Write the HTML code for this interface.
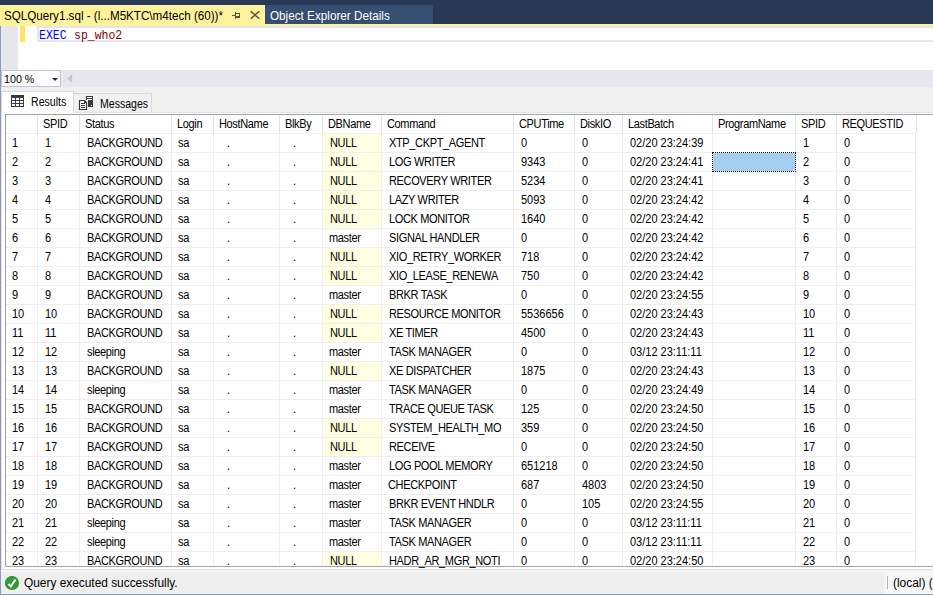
<!DOCTYPE html>
<html><head><meta charset="utf-8"><style>
*{margin:0;padding:0;box-sizing:border-box}
html,body{width:933px;height:595px;overflow:hidden;background:#F0F0F0;font-family:"Liberation Sans",sans-serif;}
.a{position:absolute}
.t{position:absolute;white-space:pre;line-height:1;}
.g{font-size:12.5px;color:#000;transform:scaleX(0.88);transform-origin:0 0}
.L{letter-spacing:-0.4px}
.s{font-size:12px;transform:scaleX(0.962);transform-origin:0 0}
</style></head><body>

<div class="a" style="left:0;top:0;width:933px;height:24px;background:#293955"></div>
<div class="a" style="left:0;top:24px;width:933px;height:2px;background:#FFF29D"></div>
<div class="a" style="left:0;top:5px;width:265px;height:21px;background:#FFF29D"></div>
<div class="t s" style="left:4px;top:10px;font-size:12.5px;color:#000;transform:scaleX(0.93)">SQLQuery1.sql - (l...M5KTC\m4tech (60))*</div>
<svg class="a" style="left:228px;top:6px" width="36" height="18" viewBox="0 0 36 18"><g fill="#5F5638"><rect x="4" y="9" width="3" height="1"/><rect x="7" y="6" width="1" height="7"/><rect x="8" y="7" width="4" height="1"/><rect x="11" y="7" width="1" height="5"/><rect x="8" y="10" width="4" height="2"/></g><path d="M22.6 5.2L31.4 12.8M31.4 5.2L22.6 12.8" stroke="#5F5638" stroke-width="1.5"/></svg>
<div class="a" style="left:265px;top:5px;width:168px;height:19px;background:#364E6F"></div>
<div class="t s" style="left:270px;top:10px;font-size:12.5px;color:#FFFFFF;transform:scaleX(0.937)">Object Explorer Details</div>
<div class="a" style="left:0;top:26px;width:933px;height:44px;background:#FFFFFF"></div>
<div class="a" style="left:1px;top:26px;width:17px;height:44px;background:#E6E7E8"></div>
<div class="a" style="left:20px;top:26px;width:5px;height:16px;background:#FFE55E"></div>
<div class="a" style="left:37px;top:26px;width:896px;height:16px;border:2px solid #E6E6F0;border-right:none"></div>
<div class="t" style="left:39px;top:29.5px;font-family:'Liberation Mono',monospace;font-size:12px;color:#0000FF;transform:scaleX(0.955);transform-origin:0 0">EXEC</div>
<div class="t" style="left:73.5px;top:29.5px;font-family:'Liberation Mono',monospace;font-size:12px;color:#800000;transform:scaleX(0.955);transform-origin:0 0">sp_who2</div>
<div class="a" style="left:0;top:70px;width:933px;height:17px;background:#E8E8EC"></div>
<div class="a" style="left:1px;top:70px;width:60px;height:17px;background:#FCFCFC;border:1px solid #C0C4D8"></div>
<div class="t" style="left:4px;top:74px;font-size:11.5px;color:#000;transform:scaleX(0.93);transform-origin:0 0">100 %</div>
<svg class="a" style="left:52px;top:78px" width="6" height="3" viewBox="0 0 6 3"><path d="M0 0H6L3 3Z" fill="#1B2840"/></svg>
<svg class="a" style="left:67px;top:74px" width="6" height="9" viewBox="0 0 6 9"><path d="M5.2 0V9L0 4.5Z" fill="#C6C7CE"/></svg>
<div class="a" style="left:1px;top:91px;width:73px;height:24px;background:#FFFFFF;border:1px solid #D9D9D9;border-bottom:none"></div>
<div class="a" style="left:73px;top:93px;width:79px;height:20px;background:#F0F0F0;border:1px solid #D9D9D9;border-bottom:none"></div>
<div class="a" style="left:73px;top:112px;width:860px;height:1px;background:#E2E2E2"></div>
<svg class="a" style="left:11px;top:95px" width="13" height="12" viewBox="0 0 13 12"><rect x="0" y="0" width="13" height="12" fill="#3A3A3A"/><g fill="#fff"><rect x="1" y="3" width="3" height="2"/><rect x="5" y="3" width="3" height="2"/><rect x="9" y="3" width="3" height="2"/><rect x="1" y="6" width="3" height="2"/><rect x="5" y="6" width="3" height="2"/><rect x="9" y="6" width="3" height="2"/><rect x="1" y="9" width="3" height="2"/><rect x="5" y="9" width="3" height="2"/><rect x="9" y="9" width="3" height="2"/></g></svg>
<div class="t g" style="left:31px;top:96px;font-size:12px">Results</div>
<svg class="a" style="left:74px;top:90px" width="26" height="24" viewBox="0 0 26 24"><rect x="12" y="6" width="7" height="11" fill="#3A3A3A"/><rect x="13" y="7" width="5" height="1" fill="#fff"/><rect x="13" y="9" width="5" height="1" fill="#fff"/><rect x="17" y="15" width="1" height="1" fill="#fff"/><rect x="4" y="10" width="10" height="10" fill="#F0F0F0"/><path d="M5.5 10.5H10.5L12.5 12.5V19.5H5.5Z" fill="#fff" stroke="#3A3A3A" stroke-width="1.2"/><path d="M10 10L13 13H10Z" fill="#3A3A3A"/><rect x="7" y="13" width="4" height="1" fill="#3A3A3A"/><rect x="7" y="15" width="4" height="1" fill="#3A3A3A"/><rect x="7" y="17" width="4" height="1" fill="#3A3A3A"/></svg>
<div class="t g" style="left:100px;top:98px;font-size:12px">Messages</div>
<div class="a" style="left:1px;top:113px;width:932px;height:456px;background:#FFFFFF;border-left:1px solid #E3E3E3"></div>
<div class="a" style="left:5px;top:114px;width:928px;height:453px;background:#FFFFFF;border-top:1px solid #A0A3AE;border-left:1px solid #A0A3AE;border-bottom:1px solid #A0A3AE"></div>
<div class="a" style="left:323px;top:134px;width:58px;height:18px;background:#FFFFE1"></div>
<div class="a" style="left:323px;top:153px;width:58px;height:18px;background:#FFFFE1"></div>
<div class="a" style="left:323px;top:172px;width:58px;height:18px;background:#FFFFE1"></div>
<div class="a" style="left:323px;top:191px;width:58px;height:18px;background:#FFFFE1"></div>
<div class="a" style="left:323px;top:210px;width:58px;height:18px;background:#FFFFE1"></div>
<div class="a" style="left:323px;top:248px;width:58px;height:18px;background:#FFFFE1"></div>
<div class="a" style="left:323px;top:267px;width:58px;height:18px;background:#FFFFE1"></div>
<div class="a" style="left:323px;top:305px;width:58px;height:18px;background:#FFFFE1"></div>
<div class="a" style="left:323px;top:324px;width:58px;height:18px;background:#FFFFE1"></div>
<div class="a" style="left:323px;top:362px;width:58px;height:18px;background:#FFFFE1"></div>
<div class="a" style="left:323px;top:419px;width:58px;height:18px;background:#FFFFE1"></div>
<div class="a" style="left:323px;top:438px;width:58px;height:18px;background:#FFFFE1"></div>
<div class="a" style="left:323px;top:552px;width:58px;height:14px;background:#FFFFE1"></div>
<div class="a" style="left:6px;top:133px;width:909px;height:1px;background:#EEEEEE"></div>
<div class="a" style="left:6px;top:152px;width:909px;height:1px;background:#EEEEEE"></div>
<div class="a" style="left:6px;top:171px;width:909px;height:1px;background:#EEEEEE"></div>
<div class="a" style="left:6px;top:190px;width:909px;height:1px;background:#EEEEEE"></div>
<div class="a" style="left:6px;top:209px;width:909px;height:1px;background:#EEEEEE"></div>
<div class="a" style="left:6px;top:228px;width:909px;height:1px;background:#EEEEEE"></div>
<div class="a" style="left:6px;top:247px;width:909px;height:1px;background:#EEEEEE"></div>
<div class="a" style="left:6px;top:266px;width:909px;height:1px;background:#EEEEEE"></div>
<div class="a" style="left:6px;top:285px;width:909px;height:1px;background:#EEEEEE"></div>
<div class="a" style="left:6px;top:304px;width:909px;height:1px;background:#EEEEEE"></div>
<div class="a" style="left:6px;top:323px;width:909px;height:1px;background:#EEEEEE"></div>
<div class="a" style="left:6px;top:342px;width:909px;height:1px;background:#EEEEEE"></div>
<div class="a" style="left:6px;top:361px;width:909px;height:1px;background:#EEEEEE"></div>
<div class="a" style="left:6px;top:380px;width:909px;height:1px;background:#EEEEEE"></div>
<div class="a" style="left:6px;top:399px;width:909px;height:1px;background:#EEEEEE"></div>
<div class="a" style="left:6px;top:418px;width:909px;height:1px;background:#EEEEEE"></div>
<div class="a" style="left:6px;top:437px;width:909px;height:1px;background:#EEEEEE"></div>
<div class="a" style="left:6px;top:456px;width:909px;height:1px;background:#EEEEEE"></div>
<div class="a" style="left:6px;top:475px;width:909px;height:1px;background:#EEEEEE"></div>
<div class="a" style="left:6px;top:494px;width:909px;height:1px;background:#EEEEEE"></div>
<div class="a" style="left:6px;top:513px;width:909px;height:1px;background:#EEEEEE"></div>
<div class="a" style="left:6px;top:532px;width:909px;height:1px;background:#EEEEEE"></div>
<div class="a" style="left:6px;top:551px;width:909px;height:1px;background:#EEEEEE"></div>
<div class="a" style="left:37px;top:115px;width:1px;height:18px;background:#E2E2E2"></div>
<div class="a" style="left:37px;top:133px;width:1px;height:433px;background:#EEEEEE"></div>
<div class="a" style="left:79px;top:115px;width:1px;height:18px;background:#E2E2E2"></div>
<div class="a" style="left:79px;top:133px;width:1px;height:433px;background:#EEEEEE"></div>
<div class="a" style="left:171px;top:115px;width:1px;height:18px;background:#E2E2E2"></div>
<div class="a" style="left:171px;top:133px;width:1px;height:433px;background:#EEEEEE"></div>
<div class="a" style="left:213px;top:115px;width:1px;height:18px;background:#E2E2E2"></div>
<div class="a" style="left:213px;top:133px;width:1px;height:433px;background:#EEEEEE"></div>
<div class="a" style="left:279px;top:115px;width:1px;height:18px;background:#E2E2E2"></div>
<div class="a" style="left:279px;top:133px;width:1px;height:433px;background:#EEEEEE"></div>
<div class="a" style="left:322px;top:115px;width:1px;height:18px;background:#E2E2E2"></div>
<div class="a" style="left:322px;top:133px;width:1px;height:433px;background:#EEEEEE"></div>
<div class="a" style="left:381px;top:115px;width:1px;height:18px;background:#E2E2E2"></div>
<div class="a" style="left:381px;top:133px;width:1px;height:433px;background:#EEEEEE"></div>
<div class="a" style="left:513px;top:115px;width:1px;height:18px;background:#E2E2E2"></div>
<div class="a" style="left:513px;top:133px;width:1px;height:433px;background:#EEEEEE"></div>
<div class="a" style="left:574px;top:115px;width:1px;height:18px;background:#E2E2E2"></div>
<div class="a" style="left:574px;top:133px;width:1px;height:433px;background:#EEEEEE"></div>
<div class="a" style="left:622px;top:115px;width:1px;height:18px;background:#E2E2E2"></div>
<div class="a" style="left:622px;top:133px;width:1px;height:433px;background:#EEEEEE"></div>
<div class="a" style="left:712px;top:115px;width:1px;height:18px;background:#E2E2E2"></div>
<div class="a" style="left:712px;top:133px;width:1px;height:433px;background:#EEEEEE"></div>
<div class="a" style="left:795px;top:115px;width:1px;height:18px;background:#E2E2E2"></div>
<div class="a" style="left:795px;top:133px;width:1px;height:433px;background:#EEEEEE"></div>
<div class="a" style="left:836px;top:115px;width:1px;height:18px;background:#E2E2E2"></div>
<div class="a" style="left:836px;top:133px;width:1px;height:433px;background:#EEEEEE"></div>
<div class="a" style="left:916px;top:115px;width:1px;height:18px;background:#E2E2E2"></div>
<div class="a" style="left:915px;top:133px;width:1px;height:433px;background:#EEEEEE"></div>
<div class="t g L" style="left:43px;top:118px">SPID</div>
<div class="t g L" style="left:85px;top:118px">Status</div>
<div class="t g L" style="left:177px;top:118px">Login</div>
<div class="t g L" style="left:219px;top:118px">HostName</div>
<div class="t g L" style="left:285px;top:118px">BlkBy</div>
<div class="t g L" style="left:328px;top:118px">DBName</div>
<div class="t g L" style="left:387px;top:118px">Command</div>
<div class="t g L" style="left:519px;top:118px">CPUTime</div>
<div class="t g L" style="left:580px;top:118px">DiskIO</div>
<div class="t g L" style="left:628px;top:118px">LastBatch</div>
<div class="t g L" style="left:718px;top:118px">ProgramName</div>
<div class="t g L" style="left:801px;top:118px">SPID</div>
<div class="t g L" style="left:842px;top:118px">REQUESTID</div>
<div class="t g" style="left:12px;top:137px">1</div>
<div class="t g" style="left:45px;top:137px">1</div>
<div class="t g L" style="left:87px;top:137px">BACKGROUND</div>
<div class="t g L" style="left:178px;top:137px">sa</div>
<div class="t g" style="left:227px;top:137px">.</div>
<div class="t g" style="left:293px;top:137px">.</div>
<div class="t g L" style="left:330px;top:137px">NULL</div>
<div class="t g L" style="left:389px;top:137px">XTP_CKPT_AGENT</div>
<div class="t g" style="left:521px;top:137px">0</div>
<div class="t g" style="left:582px;top:137px">0</div>
<div class="t g" style="left:630px;top:137px">02/20 23:24:39</div>
<div class="t g" style="left:803px;top:137px">1</div>
<div class="t g" style="left:844px;top:137px">0</div>
<div class="t g" style="left:12px;top:156px">2</div>
<div class="t g" style="left:45px;top:156px">2</div>
<div class="t g L" style="left:87px;top:156px">BACKGROUND</div>
<div class="t g L" style="left:178px;top:156px">sa</div>
<div class="t g" style="left:227px;top:156px">.</div>
<div class="t g" style="left:293px;top:156px">.</div>
<div class="t g L" style="left:330px;top:156px">NULL</div>
<div class="t g L" style="left:389px;top:156px">LOG WRITER</div>
<div class="t g" style="left:521px;top:156px">9343</div>
<div class="t g" style="left:582px;top:156px">0</div>
<div class="t g" style="left:630px;top:156px">02/20 23:24:41</div>
<div class="t g" style="left:803px;top:156px">2</div>
<div class="t g" style="left:844px;top:156px">0</div>
<div class="t g" style="left:12px;top:175px">3</div>
<div class="t g" style="left:45px;top:175px">3</div>
<div class="t g L" style="left:87px;top:175px">BACKGROUND</div>
<div class="t g L" style="left:178px;top:175px">sa</div>
<div class="t g" style="left:227px;top:175px">.</div>
<div class="t g" style="left:293px;top:175px">.</div>
<div class="t g L" style="left:330px;top:175px">NULL</div>
<div class="t g L" style="left:389px;top:175px">RECOVERY WRITER</div>
<div class="t g" style="left:521px;top:175px">5234</div>
<div class="t g" style="left:582px;top:175px">0</div>
<div class="t g" style="left:630px;top:175px">02/20 23:24:41</div>
<div class="t g" style="left:803px;top:175px">3</div>
<div class="t g" style="left:844px;top:175px">0</div>
<div class="t g" style="left:12px;top:194px">4</div>
<div class="t g" style="left:45px;top:194px">4</div>
<div class="t g L" style="left:87px;top:194px">BACKGROUND</div>
<div class="t g L" style="left:178px;top:194px">sa</div>
<div class="t g" style="left:227px;top:194px">.</div>
<div class="t g" style="left:293px;top:194px">.</div>
<div class="t g L" style="left:330px;top:194px">NULL</div>
<div class="t g L" style="left:389px;top:194px">LAZY WRITER</div>
<div class="t g" style="left:521px;top:194px">5093</div>
<div class="t g" style="left:582px;top:194px">0</div>
<div class="t g" style="left:630px;top:194px">02/20 23:24:42</div>
<div class="t g" style="left:803px;top:194px">4</div>
<div class="t g" style="left:844px;top:194px">0</div>
<div class="t g" style="left:12px;top:213px">5</div>
<div class="t g" style="left:45px;top:213px">5</div>
<div class="t g L" style="left:87px;top:213px">BACKGROUND</div>
<div class="t g L" style="left:178px;top:213px">sa</div>
<div class="t g" style="left:227px;top:213px">.</div>
<div class="t g" style="left:293px;top:213px">.</div>
<div class="t g L" style="left:330px;top:213px">NULL</div>
<div class="t g L" style="left:389px;top:213px">LOCK MONITOR</div>
<div class="t g" style="left:521px;top:213px">1640</div>
<div class="t g" style="left:582px;top:213px">0</div>
<div class="t g" style="left:630px;top:213px">02/20 23:24:42</div>
<div class="t g" style="left:803px;top:213px">5</div>
<div class="t g" style="left:844px;top:213px">0</div>
<div class="t g" style="left:12px;top:232px">6</div>
<div class="t g" style="left:45px;top:232px">6</div>
<div class="t g L" style="left:87px;top:232px">BACKGROUND</div>
<div class="t g L" style="left:178px;top:232px">sa</div>
<div class="t g" style="left:227px;top:232px">.</div>
<div class="t g" style="left:293px;top:232px">.</div>
<div class="t g L" style="left:329px;top:232px">master</div>
<div class="t g L" style="left:389px;top:232px">SIGNAL HANDLER</div>
<div class="t g" style="left:521px;top:232px">0</div>
<div class="t g" style="left:582px;top:232px">0</div>
<div class="t g" style="left:630px;top:232px">02/20 23:24:42</div>
<div class="t g" style="left:803px;top:232px">6</div>
<div class="t g" style="left:844px;top:232px">0</div>
<div class="t g" style="left:12px;top:251px">7</div>
<div class="t g" style="left:45px;top:251px">7</div>
<div class="t g L" style="left:87px;top:251px">BACKGROUND</div>
<div class="t g L" style="left:178px;top:251px">sa</div>
<div class="t g" style="left:227px;top:251px">.</div>
<div class="t g" style="left:293px;top:251px">.</div>
<div class="t g L" style="left:330px;top:251px">NULL</div>
<div class="t g L" style="left:389px;top:251px">XIO_RETRY_WORKER</div>
<div class="t g" style="left:521px;top:251px">718</div>
<div class="t g" style="left:582px;top:251px">0</div>
<div class="t g" style="left:630px;top:251px">02/20 23:24:42</div>
<div class="t g" style="left:803px;top:251px">7</div>
<div class="t g" style="left:844px;top:251px">0</div>
<div class="t g" style="left:12px;top:270px">8</div>
<div class="t g" style="left:45px;top:270px">8</div>
<div class="t g L" style="left:87px;top:270px">BACKGROUND</div>
<div class="t g L" style="left:178px;top:270px">sa</div>
<div class="t g" style="left:227px;top:270px">.</div>
<div class="t g" style="left:293px;top:270px">.</div>
<div class="t g L" style="left:330px;top:270px">NULL</div>
<div class="t g L" style="left:389px;top:270px">XIO_LEASE_RENEWA</div>
<div class="t g" style="left:521px;top:270px">750</div>
<div class="t g" style="left:582px;top:270px">0</div>
<div class="t g" style="left:630px;top:270px">02/20 23:24:42</div>
<div class="t g" style="left:803px;top:270px">8</div>
<div class="t g" style="left:844px;top:270px">0</div>
<div class="t g" style="left:12px;top:289px">9</div>
<div class="t g" style="left:45px;top:289px">9</div>
<div class="t g L" style="left:87px;top:289px">BACKGROUND</div>
<div class="t g L" style="left:178px;top:289px">sa</div>
<div class="t g" style="left:227px;top:289px">.</div>
<div class="t g" style="left:293px;top:289px">.</div>
<div class="t g L" style="left:329px;top:289px">master</div>
<div class="t g L" style="left:389px;top:289px">BRKR TASK</div>
<div class="t g" style="left:521px;top:289px">0</div>
<div class="t g" style="left:582px;top:289px">0</div>
<div class="t g" style="left:630px;top:289px">02/20 23:24:55</div>
<div class="t g" style="left:803px;top:289px">9</div>
<div class="t g" style="left:844px;top:289px">0</div>
<div class="t g" style="left:12px;top:308px">10</div>
<div class="t g" style="left:45px;top:308px">10</div>
<div class="t g L" style="left:87px;top:308px">BACKGROUND</div>
<div class="t g L" style="left:178px;top:308px">sa</div>
<div class="t g" style="left:227px;top:308px">.</div>
<div class="t g" style="left:293px;top:308px">.</div>
<div class="t g L" style="left:330px;top:308px">NULL</div>
<div class="t g L" style="left:389px;top:308px">RESOURCE MONITOR</div>
<div class="t g" style="left:521px;top:308px">5536656</div>
<div class="t g" style="left:582px;top:308px">0</div>
<div class="t g" style="left:630px;top:308px">02/20 23:24:43</div>
<div class="t g" style="left:803px;top:308px">10</div>
<div class="t g" style="left:844px;top:308px">0</div>
<div class="t g" style="left:12px;top:327px">11</div>
<div class="t g" style="left:45px;top:327px">11</div>
<div class="t g L" style="left:87px;top:327px">BACKGROUND</div>
<div class="t g L" style="left:178px;top:327px">sa</div>
<div class="t g" style="left:227px;top:327px">.</div>
<div class="t g" style="left:293px;top:327px">.</div>
<div class="t g L" style="left:330px;top:327px">NULL</div>
<div class="t g L" style="left:389px;top:327px">XE TIMER</div>
<div class="t g" style="left:521px;top:327px">4500</div>
<div class="t g" style="left:582px;top:327px">0</div>
<div class="t g" style="left:630px;top:327px">02/20 23:24:43</div>
<div class="t g" style="left:803px;top:327px">11</div>
<div class="t g" style="left:844px;top:327px">0</div>
<div class="t g" style="left:12px;top:346px">12</div>
<div class="t g" style="left:45px;top:346px">12</div>
<div class="t g L" style="left:87px;top:346px">sleeping</div>
<div class="t g L" style="left:178px;top:346px">sa</div>
<div class="t g" style="left:227px;top:346px">.</div>
<div class="t g" style="left:293px;top:346px">.</div>
<div class="t g L" style="left:329px;top:346px">master</div>
<div class="t g L" style="left:389px;top:346px">TASK MANAGER</div>
<div class="t g" style="left:521px;top:346px">0</div>
<div class="t g" style="left:582px;top:346px">0</div>
<div class="t g" style="left:630px;top:346px">03/12 23:11:11</div>
<div class="t g" style="left:803px;top:346px">12</div>
<div class="t g" style="left:844px;top:346px">0</div>
<div class="t g" style="left:12px;top:365px">13</div>
<div class="t g" style="left:45px;top:365px">13</div>
<div class="t g L" style="left:87px;top:365px">BACKGROUND</div>
<div class="t g L" style="left:178px;top:365px">sa</div>
<div class="t g" style="left:227px;top:365px">.</div>
<div class="t g" style="left:293px;top:365px">.</div>
<div class="t g L" style="left:330px;top:365px">NULL</div>
<div class="t g L" style="left:389px;top:365px">XE DISPATCHER</div>
<div class="t g" style="left:521px;top:365px">1875</div>
<div class="t g" style="left:582px;top:365px">0</div>
<div class="t g" style="left:630px;top:365px">02/20 23:24:43</div>
<div class="t g" style="left:803px;top:365px">13</div>
<div class="t g" style="left:844px;top:365px">0</div>
<div class="t g" style="left:12px;top:384px">14</div>
<div class="t g" style="left:45px;top:384px">14</div>
<div class="t g L" style="left:87px;top:384px">sleeping</div>
<div class="t g L" style="left:178px;top:384px">sa</div>
<div class="t g" style="left:227px;top:384px">.</div>
<div class="t g" style="left:293px;top:384px">.</div>
<div class="t g L" style="left:329px;top:384px">master</div>
<div class="t g L" style="left:389px;top:384px">TASK MANAGER</div>
<div class="t g" style="left:521px;top:384px">0</div>
<div class="t g" style="left:582px;top:384px">0</div>
<div class="t g" style="left:630px;top:384px">02/20 23:24:49</div>
<div class="t g" style="left:803px;top:384px">14</div>
<div class="t g" style="left:844px;top:384px">0</div>
<div class="t g" style="left:12px;top:403px">15</div>
<div class="t g" style="left:45px;top:403px">15</div>
<div class="t g L" style="left:87px;top:403px">BACKGROUND</div>
<div class="t g L" style="left:178px;top:403px">sa</div>
<div class="t g" style="left:227px;top:403px">.</div>
<div class="t g" style="left:293px;top:403px">.</div>
<div class="t g L" style="left:329px;top:403px">master</div>
<div class="t g L" style="left:389px;top:403px">TRACE QUEUE TASK</div>
<div class="t g" style="left:521px;top:403px">125</div>
<div class="t g" style="left:582px;top:403px">0</div>
<div class="t g" style="left:630px;top:403px">02/20 23:24:50</div>
<div class="t g" style="left:803px;top:403px">15</div>
<div class="t g" style="left:844px;top:403px">0</div>
<div class="t g" style="left:12px;top:422px">16</div>
<div class="t g" style="left:45px;top:422px">16</div>
<div class="t g L" style="left:87px;top:422px">BACKGROUND</div>
<div class="t g L" style="left:178px;top:422px">sa</div>
<div class="t g" style="left:227px;top:422px">.</div>
<div class="t g" style="left:293px;top:422px">.</div>
<div class="t g L" style="left:330px;top:422px">NULL</div>
<div class="t g L" style="left:389px;top:422px">SYSTEM_HEALTH_MO</div>
<div class="t g" style="left:521px;top:422px">359</div>
<div class="t g" style="left:582px;top:422px">0</div>
<div class="t g" style="left:630px;top:422px">02/20 23:24:50</div>
<div class="t g" style="left:803px;top:422px">16</div>
<div class="t g" style="left:844px;top:422px">0</div>
<div class="t g" style="left:12px;top:441px">17</div>
<div class="t g" style="left:45px;top:441px">17</div>
<div class="t g L" style="left:87px;top:441px">BACKGROUND</div>
<div class="t g L" style="left:178px;top:441px">sa</div>
<div class="t g" style="left:227px;top:441px">.</div>
<div class="t g" style="left:293px;top:441px">.</div>
<div class="t g L" style="left:330px;top:441px">NULL</div>
<div class="t g L" style="left:389px;top:441px">RECEIVE</div>
<div class="t g" style="left:521px;top:441px">0</div>
<div class="t g" style="left:582px;top:441px">0</div>
<div class="t g" style="left:630px;top:441px">02/20 23:24:50</div>
<div class="t g" style="left:803px;top:441px">17</div>
<div class="t g" style="left:844px;top:441px">0</div>
<div class="t g" style="left:12px;top:460px">18</div>
<div class="t g" style="left:45px;top:460px">18</div>
<div class="t g L" style="left:87px;top:460px">BACKGROUND</div>
<div class="t g L" style="left:178px;top:460px">sa</div>
<div class="t g" style="left:227px;top:460px">.</div>
<div class="t g" style="left:293px;top:460px">.</div>
<div class="t g L" style="left:329px;top:460px">master</div>
<div class="t g L" style="left:389px;top:460px">LOG POOL MEMORY</div>
<div class="t g" style="left:521px;top:460px">651218</div>
<div class="t g" style="left:582px;top:460px">0</div>
<div class="t g" style="left:630px;top:460px">02/20 23:24:50</div>
<div class="t g" style="left:803px;top:460px">18</div>
<div class="t g" style="left:844px;top:460px">0</div>
<div class="t g" style="left:12px;top:479px">19</div>
<div class="t g" style="left:45px;top:479px">19</div>
<div class="t g L" style="left:87px;top:479px">BACKGROUND</div>
<div class="t g L" style="left:178px;top:479px">sa</div>
<div class="t g" style="left:227px;top:479px">.</div>
<div class="t g" style="left:293px;top:479px">.</div>
<div class="t g L" style="left:329px;top:479px">master</div>
<div class="t g L" style="left:388px;top:479px">CHECKPOINT</div>
<div class="t g" style="left:521px;top:479px">687</div>
<div class="t g" style="left:582px;top:479px">4803</div>
<div class="t g" style="left:630px;top:479px">02/20 23:24:50</div>
<div class="t g" style="left:803px;top:479px">19</div>
<div class="t g" style="left:844px;top:479px">0</div>
<div class="t g" style="left:12px;top:498px">20</div>
<div class="t g" style="left:45px;top:498px">20</div>
<div class="t g L" style="left:87px;top:498px">BACKGROUND</div>
<div class="t g L" style="left:178px;top:498px">sa</div>
<div class="t g" style="left:227px;top:498px">.</div>
<div class="t g" style="left:293px;top:498px">.</div>
<div class="t g L" style="left:329px;top:498px">master</div>
<div class="t g L" style="left:389px;top:498px">BRKR EVENT HNDLR</div>
<div class="t g" style="left:521px;top:498px">0</div>
<div class="t g" style="left:582px;top:498px">105</div>
<div class="t g" style="left:630px;top:498px">02/20 23:24:55</div>
<div class="t g" style="left:803px;top:498px">20</div>
<div class="t g" style="left:844px;top:498px">0</div>
<div class="t g" style="left:12px;top:517px">21</div>
<div class="t g" style="left:45px;top:517px">21</div>
<div class="t g L" style="left:87px;top:517px">sleeping</div>
<div class="t g L" style="left:178px;top:517px">sa</div>
<div class="t g" style="left:227px;top:517px">.</div>
<div class="t g" style="left:293px;top:517px">.</div>
<div class="t g L" style="left:329px;top:517px">master</div>
<div class="t g L" style="left:389px;top:517px">TASK MANAGER</div>
<div class="t g" style="left:521px;top:517px">0</div>
<div class="t g" style="left:582px;top:517px">0</div>
<div class="t g" style="left:630px;top:517px">03/12 23:11:11</div>
<div class="t g" style="left:803px;top:517px">21</div>
<div class="t g" style="left:844px;top:517px">0</div>
<div class="t g" style="left:12px;top:536px">22</div>
<div class="t g" style="left:45px;top:536px">22</div>
<div class="t g L" style="left:87px;top:536px">sleeping</div>
<div class="t g L" style="left:178px;top:536px">sa</div>
<div class="t g" style="left:227px;top:536px">.</div>
<div class="t g" style="left:293px;top:536px">.</div>
<div class="t g L" style="left:329px;top:536px">master</div>
<div class="t g L" style="left:389px;top:536px">TASK MANAGER</div>
<div class="t g" style="left:521px;top:536px">0</div>
<div class="t g" style="left:582px;top:536px">0</div>
<div class="t g" style="left:630px;top:536px">03/12 23:11:11</div>
<div class="t g" style="left:803px;top:536px">22</div>
<div class="t g" style="left:844px;top:536px">0</div>
<div class="t g" style="left:12px;top:555px">23</div>
<div class="t g" style="left:45px;top:555px">23</div>
<div class="t g L" style="left:87px;top:555px">BACKGROUND</div>
<div class="t g L" style="left:178px;top:555px">sa</div>
<div class="t g" style="left:227px;top:555px">.</div>
<div class="t g" style="left:293px;top:555px">.</div>
<div class="t g L" style="left:330px;top:555px">NULL</div>
<div class="t g L" style="left:389px;top:555px">HADR_AR_MGR_NOTI</div>
<div class="t g" style="left:521px;top:555px">0</div>
<div class="t g" style="left:582px;top:555px">0</div>
<div class="t g" style="left:630px;top:555px">02/20 23:24:50</div>
<div class="t g" style="left:803px;top:555px">23</div>
<div class="t g" style="left:844px;top:555px">0</div>
<div class="a" style="left:712px;top:152px;width:84px;height:20px;background:#A6CEF0;background-clip:padding-box;border:1px dotted #000"></div>
<div class="a" style="left:1px;top:569px;width:932px;height:1px;background:#DCDCDC"></div>
<div class="a" style="left:1px;top:570px;width:932px;height:24px;background:#F6F6F6"></div>
<div class="a" style="left:1px;top:572px;width:883px;height:22px;background:#EEEEEE"></div>
<svg class="a" style="left:5px;top:576px" width="15" height="15" viewBox="0 0 15 15"><circle cx="7" cy="7" r="7.1" fill="#2F9A35"/><path d="M3.4 7.9L5.9 10.3L10.4 3.6" fill="none" stroke="#fff" stroke-width="2.1"/></svg>
<div class="t s" style="left:24px;top:577px;color:#000;transform:scaleX(0.99)">Query executed successfully.</div>
<div class="a" style="left:887px;top:576px;width:1px;height:13px;background:#B4B4B4"></div>
<div class="t s" style="left:893px;top:577px;color:#000;transform:scaleX(0.99)">(local) (</div>
<div class="a" style="left:0;top:594px;width:933px;height:1px;background:#8C9AC0"></div>
<div class="a" style="left:0;top:26px;width:1px;height:569px;background:#8C9AC0"></div>
</body></html>
